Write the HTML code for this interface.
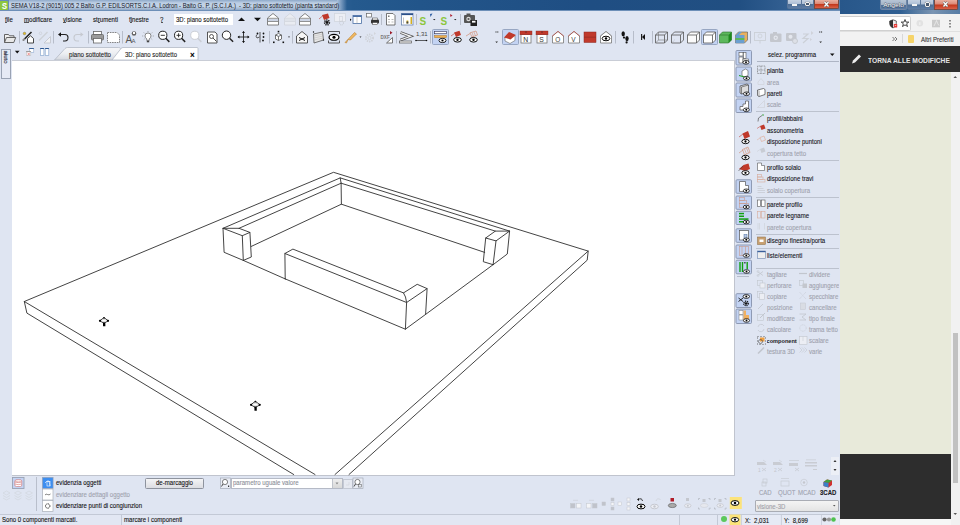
<!DOCTYPE html>
<html><head><meta charset="utf-8">
<style>
*{margin:0;padding:0;box-sizing:border-box}
html,body{width:960px;height:525px;overflow:hidden;background:#dfe5f2;font-family:"Liberation Sans",sans-serif;color:#000;position:relative}
.a{position:absolute}
.t{position:absolute;white-space:nowrap;line-height:8px;-webkit-text-stroke:0.1px currentColor;transform-origin:0 0}
svg{position:absolute;left:0;top:0;overflow:visible}
</style></head><body>
<div class="a" style="left:0px;top:0px;width:840px;height:11px;background:linear-gradient(90deg,#6a8cba 0%,#3c6ca0 38%,#255a8e 42%,#22558a 50%,#1f4e83 70%,#214f82 88%,#3a6698 96%,#5a80ac 100%)"></div>
<div class="a" style="left:0px;top:10px;width:840px;height:1px;background:#6d8fb8"></div>
<div class="a" style="left:9px;top:0px;width:328px;height:10px;background:linear-gradient(180deg,rgba(150,175,205,.9) 0%,rgba(196,212,232,.95) 30%,rgba(200,215,234,.95) 65%,rgba(150,172,200,.9) 100%)"></div>
<div class="a" style="left:337px;top:0px;width:10px;height:10px;background:linear-gradient(90deg,rgba(185,203,226,.9),rgba(185,203,226,0))"></div>
<div class="a" style="left:0px;top:1px;width:8.3px;height:9px;background:#8dc63f;border-radius:0 1px 1px 0"></div>
<div class="t" style="left:1.5px;top:1.81px;font-size:8.62px;color:#fff;font-weight:bold;transform:scaleX(0.870);">S</div>
<div class="t" style="left:11px;top:1.97px;font-size:6.73px;color:#141826;font-weight:normal;transform:scaleX(0.870);-webkit-text-stroke:0">SEMA V18-2 (9015) 005 2 Baito G.P. EDILSORTS.C.I.A. Lodron - Baito G. P. (S.C.I.A.) &nbsp;- 3D: piano sottotetto (pianta standard)</div>
<div class="a" style="left:787px;top:0px;width:15px;height:9px;border:0.6px solid #5a769a;border-top:none;border-radius:0 0 0 2px;background:linear-gradient(180deg,#c6d2e2 0%,#aebfd6 48%,#4d6d94 52%,#5d7da6 100%)"></div>
<div class="a" style="left:802px;top:0px;width:12px;height:9px;border:0.6px solid #5a769a;border-top:none;border-left:none;background:linear-gradient(180deg,#c6d2e2 0%,#aebfd6 48%,#4d6d94 52%,#5d7da6 100%)"></div>
<div class="a" style="left:814px;top:0px;width:25px;height:9px;border:0.6px solid #7a4a40;border-top:none;border-radius:0 0 2px 0;background:linear-gradient(180deg,#eab0a0 0%,#dc8a78 45%,#c4381c 55%,#d86048 100%)"></div>
<div class="a" style="left:792px;top:4.2px;width:5px;height:1.6px;background:#f4f4f4;box-shadow:0 0 0.6px #333"></div>
<div class="a" style="left:804.8px;top:1.6px;width:5px;height:4.8px;border:1.3px solid #f0f0f0;border-radius:1px;background:#4a5a70;box-shadow:0 0 0.8px #222"></div>
<svg width="960" height="525"><path d="M824.5,2 L828.5,6.5 M828.5,2 L824.5,6.5" stroke="#555" stroke-width="2.2"/><path d="M824.5,2 L828.5,6.5 M828.5,2 L824.5,6.5" stroke="#fff" stroke-width="1.3"/></svg>
<div class="t" style="left:4.5px;top:15.87px;font-size:7.01px;color:#111;font-weight:normal;transform:scaleX(0.870);">file</div>
<div class="t" style="left:24px;top:15.87px;font-size:7.01px;color:#111;font-weight:normal;transform:scaleX(0.870);">modificare</div>
<div class="t" style="left:63px;top:15.87px;font-size:7.01px;color:#111;font-weight:normal;transform:scaleX(0.870);">visione</div>
<div class="t" style="left:93px;top:15.87px;font-size:7.01px;color:#111;font-weight:normal;transform:scaleX(0.870);">strumenti</div>
<div class="t" style="left:129px;top:15.87px;font-size:7.01px;color:#111;font-weight:normal;transform:scaleX(0.870);">finestre</div>
<div class="t" style="left:160px;top:15.87px;font-size:7.01px;color:#111;font-weight:normal;transform:scaleX(0.870);">?</div>
<div class="a" style="left:4.8px;top:22.2px;width:2.2px;height:0.6px;background:#555"></div>
<div class="a" style="left:24.2px;top:22.2px;width:4.5px;height:0.6px;background:#555"></div>
<div class="a" style="left:63.2px;top:22.2px;width:3px;height:0.6px;background:#555"></div>
<div class="a" style="left:97.5px;top:22.2px;width:2px;height:0.6px;background:#555"></div>
<div class="a" style="left:129.5px;top:22.2px;width:2px;height:0.6px;background:#555"></div>
<div class="a" style="left:161px;top:22.2px;width:2px;height:0.6px;background:#555"></div>
<div class="a" style="left:174px;top:14px;width:59px;height:11px;background:#fff"></div>
<div class="t" style="left:175.5px;top:15.91px;font-size:6.90px;color:#111;font-weight:normal;transform:scaleX(0.870);">3D: piano sottotetto</div>
<div class="a" style="left:1px;top:49px;width:10px;height:30px;border:1px solid #9aa3b4;background:#e6eaf5"></div>
<div class="t" style="left:-6px;top:53px;font-size:6px;color:#223;transform:rotate(90deg);transform-origin:50% 50%;width:24px;text-align:center">aiuto</div>
<svg width="960" height="525"><defs><linearGradient id="tg" x1="0" y1="0" x2="0" y2="1"><stop offset="0" stop-color="#f6f6f8"/><stop offset="0.5" stop-color="#eceef2"/><stop offset="1" stop-color="#d4d7de"/></linearGradient></defs><path d="M54.5,60 L65,48.5 Q66,47.5 67.5,47.5 L118.5,47.5 Q120.5,47.5 121,49 L121,60 Z" fill="url(#tg)" stroke="#aab1bf" stroke-width="0.7"/><path d="M112,60 L121,48.5 Q121.8,47.5 123,47.5 L197,47.5 Q198,47.5 198,48.5 L198,60 Z" fill="#fff" stroke="#aab1bf" stroke-width="0.7"/></svg>
<div class="t" style="left:69px;top:51.15px;font-size:7.07px;color:#222;font-weight:normal;transform:scaleX(0.870);">piano sottotetto</div>
<div class="t" style="left:125px;top:51.21px;font-size:6.90px;color:#222;font-weight:normal;transform:scaleX(0.870);">3D: piano sottotetto</div>
<div class="t" style="left:190px;top:50.71px;font-size:9.20px;color:#000;font-weight:bold;transform:scaleX(0.870);">×</div>
<div class="a" style="left:12px;top:59.5px;width:723px;height:416.5px;background:#fff;border-right:1px solid #c0c4ce;border-bottom:1px solid #c0c4ce;border-top:0.8px solid #c9cdd6"></div>
<svg width="960" height="525">
<g fill="none" stroke="#2a2a2a" stroke-width="0.88" stroke-linejoin="round" stroke-linecap="round">
<polyline points="315,474.5 24.3,301.5 333.5,172.3 588.2,251.1 335,474.5"/>
<polyline points="24.3,301.5 26.9,313.1 293.7,474.5"/>
<polyline points="588.2,251.1 587.2,260.2 349,474.5"/>
<polyline points="223,228.3 340.2,177.9 509.6,231.1"/>
<polyline points="239,228.3 341.1,183.2 495.3,231.1"/>
<line x1="340.2" y1="177.9" x2="341.1" y2="183.2"/>
<polyline points="251.3,246.4 341.4,204.2 484.7,252.4"/>
<line x1="341.1" y1="183.2" x2="341.4" y2="204.2"/>
<polyline points="223,228.3 239,228.3 249.9,232.4 242.3,235.7 223,228.3 224.1,252.3 243.3,260.4 251.3,257 249.9,232.4"/>
<line x1="242.3" y1="235.7" x2="243.3" y2="260.4"/>
<polyline points="509.6,231.1 495.3,231.1 485.7,238 496,240.9 509.6,231.1 507.3,254 493.1,264.7 483.3,261.7 485.7,238"/>
<line x1="496" y1="240.9" x2="493.1" y2="264.7"/>
<line x1="243.3" y1="260.4" x2="285.2" y2="278.9"/>
<line x1="425.6" y1="314.4" x2="493.1" y2="264.7"/>
<polyline points="285.2,278.9 284.9,253.5 292.9,249.1 403.5,292.9 417.2,284.3 427.1,288.6 406.6,302.5 284.9,253.5"/>
<polyline points="285.2,278.9 405.4,329.2 425.6,314.4 427.1,288.6"/>
<polyline points="403.5,292.9 405.5,297 406.6,302.5 405.4,329.2"/>
</g>
<g>
<path d="M99.7,320.8 L104,317.6 L108.3,320.8 L104,323.2 Z" fill="#fff" stroke="#222" stroke-width="0.9"/><ellipse cx="104" cy="320.6" rx="2.3" ry="1.2" fill="#fff" stroke="#bbb" stroke-width="0.5"/><circle cx="100.0" cy="320.8" r="1.1" fill="#000"/><circle cx="108.0" cy="320.8" r="1.1" fill="#000"/><circle cx="104" cy="317.8" r="0.9" fill="#111"/><path d="M102.9,322.6 L105.3,322.6 L105.4,326.3 L103.1,326.3 Z" fill="#000"/>
<path d="M250.756,404.8 L255.4,401.344 L260.044,404.8 L255.4,407.392 Z" fill="#fff" stroke="#222" stroke-width="0.9"/><ellipse cx="255.4" cy="404.6" rx="2.484" ry="1.296" fill="#fff" stroke="#bbb" stroke-width="0.5"/><circle cx="251.08" cy="404.8" r="1.1" fill="#000"/><circle cx="259.72" cy="404.8" r="1.1" fill="#000"/><circle cx="255.4" cy="401.56" r="0.9" fill="#111"/><path d="M254.3,406.6 L256.7,406.6 L256.8,410.74 L254.5,410.74 Z" fill="#000"/>
</g>
</svg>
<div class="a" style="left:839px;top:46px;width:1px;height:479px;background:#c9cfdc"></div>
<div class="t" style="left:767.7px;top:50.61px;font-size:6.90px;color:#111;font-weight:normal;transform:scaleX(0.870);">selez. programma</div>
<svg width="960" height="525"><path d="M830,53.5 L834.5,53.5 L832.25,56 Z" fill="#111"/></svg>
<div class="a" style="left:757px;top:61px;width:82px;height:1px;background:#aeb5c4"></div>
<div class="t" style="left:766.6px;top:67.19px;font-size:6.96px;color:#141420;font-weight:normal;transform:scaleX(0.870);">pianta</div>
<div class="t" style="left:766.6px;top:78.59px;font-size:6.96px;color:#9ea2ad;font-weight:normal;transform:scaleX(0.870);">area</div>
<div class="t" style="left:766.6px;top:89.99px;font-size:6.96px;color:#141420;font-weight:normal;transform:scaleX(0.870);">pareti</div>
<div class="t" style="left:766.6px;top:101.39px;font-size:6.96px;color:#9ea2ad;font-weight:normal;transform:scaleX(0.870);">scale</div>
<div class="t" style="left:766.6px;top:115.49px;font-size:6.96px;color:#141420;font-weight:normal;transform:scaleX(0.870);">profili/abbaini</div>
<div class="t" style="left:766.6px;top:126.79px;font-size:6.96px;color:#141420;font-weight:normal;transform:scaleX(0.870);">assonometria</div>
<div class="t" style="left:766.6px;top:138.19px;font-size:6.96px;color:#141420;font-weight:normal;transform:scaleX(0.870);">disposizione puntoni</div>
<div class="t" style="left:766.6px;top:149.69px;font-size:6.96px;color:#9ea2ad;font-weight:normal;transform:scaleX(0.870);">copertura tetto</div>
<div class="t" style="left:766.6px;top:163.89px;font-size:6.96px;color:#141420;font-weight:normal;transform:scaleX(0.870);">profilo solaio</div>
<div class="t" style="left:766.6px;top:175.29px;font-size:6.96px;color:#141420;font-weight:normal;transform:scaleX(0.870);">disposizione travi</div>
<div class="t" style="left:766.6px;top:186.79px;font-size:6.96px;color:#9ea2ad;font-weight:normal;transform:scaleX(0.870);">solaio copertura</div>
<div class="t" style="left:766.6px;top:200.69px;font-size:6.96px;color:#141420;font-weight:normal;transform:scaleX(0.870);">parete profilo</div>
<div class="t" style="left:766.6px;top:211.99px;font-size:6.96px;color:#141420;font-weight:normal;transform:scaleX(0.870);">parete legname</div>
<div class="t" style="left:766.6px;top:223.59px;font-size:6.96px;color:#9ea2ad;font-weight:normal;transform:scaleX(0.870);">parete copertura</div>
<div class="t" style="left:766.6px;top:237.39px;font-size:6.96px;color:#141420;font-weight:normal;transform:scaleX(0.870);">disegno finestra/porta</div>
<div class="t" style="left:766.6px;top:251.59px;font-size:6.96px;color:#141420;font-weight:normal;transform:scaleX(0.870);">liste/elementi</div>
<div class="a" style="left:756px;top:110.8px;width:83px;height:1px;background:#bcc2ce"></div>
<div class="a" style="left:756px;top:159.8px;width:83px;height:1px;background:#bcc2ce"></div>
<div class="a" style="left:756px;top:196.7px;width:83px;height:1px;background:#bcc2ce"></div>
<div class="a" style="left:756px;top:234.2px;width:83px;height:1px;background:#bcc2ce"></div>
<div class="a" style="left:756px;top:248.1px;width:83px;height:1px;background:#bcc2ce"></div>
<div class="a" style="left:756px;top:267.9px;width:83px;height:1px;background:#bcc2ce"></div>
<div class="t" style="left:766.6px;top:270.99px;font-size:6.96px;color:#9ea2ad;font-weight:normal;transform:scaleX(0.870);">tagliare</div>
<div class="t" style="left:766.6px;top:281.99px;font-size:6.96px;color:#9ea2ad;font-weight:normal;transform:scaleX(0.870);">perforare</div>
<div class="t" style="left:766.6px;top:292.99px;font-size:6.96px;color:#9ea2ad;font-weight:normal;transform:scaleX(0.870);">copiare</div>
<div class="t" style="left:766.6px;top:304.09px;font-size:6.96px;color:#9ea2ad;font-weight:normal;transform:scaleX(0.870);">posizione</div>
<div class="t" style="left:766.6px;top:314.99px;font-size:6.96px;color:#9ea2ad;font-weight:normal;transform:scaleX(0.870);">modificare</div>
<div class="t" style="left:766.6px;top:325.99px;font-size:6.96px;color:#9ea2ad;font-weight:normal;transform:scaleX(0.870);">calcolare</div>
<div class="t" style="left:766.6px;top:337.46px;font-size:5.60px;color:#1a1a24;font-weight:bold;transform:scaleX(1.000);width:30.5px;overflow:hidden;-webkit-text-stroke:0">componenti</div>
<div class="t" style="left:766.6px;top:347.99px;font-size:6.96px;color:#9ea2ad;font-weight:normal;transform:scaleX(0.870);">testura 3D</div>
<div class="t" style="left:808.7px;top:270.99px;font-size:6.96px;color:#9ea2ad;font-weight:normal;transform:scaleX(0.870);">dividere</div>
<div class="t" style="left:808.7px;top:281.99px;font-size:6.96px;color:#9ea2ad;font-weight:normal;transform:scaleX(0.870);">aggiungere</div>
<div class="t" style="left:808.7px;top:292.99px;font-size:6.96px;color:#9ea2ad;font-weight:normal;transform:scaleX(0.870);">specchiare</div>
<div class="t" style="left:808.7px;top:304.09px;font-size:6.96px;color:#9ea2ad;font-weight:normal;transform:scaleX(0.870);">cancellare</div>
<div class="t" style="left:808.7px;top:314.99px;font-size:6.96px;color:#9ea2ad;font-weight:normal;transform:scaleX(0.870);">tipo finale</div>
<div class="t" style="left:808.7px;top:325.99px;font-size:6.96px;color:#9ea2ad;font-weight:normal;transform:scaleX(0.870);">trama tetto</div>
<div class="t" style="left:808.7px;top:336.99px;font-size:6.96px;color:#9ea2ad;font-weight:normal;transform:scaleX(0.870);">scalare</div>
<div class="t" style="left:808.7px;top:347.99px;font-size:6.96px;color:#9ea2ad;font-weight:normal;transform:scaleX(0.870);">varie</div>
<div class="t" style="left:759px;top:489.01px;font-size:6.90px;color:#9ea3b0;font-weight:normal;transform:scaleX(0.870);">CAD</div>
<div class="t" style="left:778px;top:489.01px;font-size:6.90px;color:#9ea3b0;font-weight:normal;transform:scaleX(0.870);">QUOT</div>
<div class="t" style="left:797.5px;top:489.01px;font-size:6.90px;color:#9ea3b0;font-weight:normal;transform:scaleX(0.870);">MCAD</div>
<div class="t" style="left:820px;top:489.01px;font-size:6.90px;color:#1a1a24;font-weight:bold;transform:scaleX(0.870);">3CAD</div>
<div class="a" style="left:831px;top:457px;width:9px;height:18px;background:#eceff6"></div>
<svg width="960" height="525"><path d="M833.5,462 L836.5,462 L835,460 Z M833.5,469 L836.5,469 L835,471 Z" fill="#333"/></svg>
<div class="a" style="left:755px;top:500px;width:84px;height:11.5px;background:linear-gradient(#f4f4f4,#e4e4e4);border:1px solid #a9acb4;border-radius:1px"></div>
<div class="t" style="left:756.5px;top:502.51px;font-size:6.90px;color:#a0a0a8;font-weight:normal;transform:scaleX(0.870);">visione-3D</div>
<svg width="960" height="525"><path d="M833,505 L835.5,505 L834.25,506.6 Z" fill="#555"/></svg>
<div class="a" style="left:36px;top:477px;width:1px;height:34px;background:#b9bfcc"></div>
<div class="t" style="left:56px;top:479.39px;font-size:6.96px;color:#111;font-weight:normal;transform:scaleX(0.870);">evidenzia oggetti</div>
<div class="t" style="left:56px;top:490.79px;font-size:6.96px;color:#9ea2ad;font-weight:normal;transform:scaleX(0.870);">evidenziare dettagli oggetto</div>
<div class="t" style="left:56px;top:502.29px;font-size:6.96px;color:#111;font-weight:normal;transform:scaleX(0.870);">evidenziare punti di congiunzion</div>
<div class="a" style="left:145px;top:477.5px;width:59px;height:11px;background:linear-gradient(#f4f4f6,#dcdde2);border:1px solid #8e939e;border-radius:1.5px"></div>
<div class="t" style="left:156px;top:478.99px;font-size:6.96px;color:#111;font-weight:normal;transform:scaleX(0.870);">de-marcaggio</div>
<div class="a" style="left:231px;top:478px;width:112px;height:10.5px;background:#fff;border:1px solid #b5bac6"></div>
<div class="t" style="left:233px;top:479.39px;font-size:6.96px;color:#8a8e98;font-weight:normal;transform:scaleX(0.870);">parametro uguale valore</div>
<div class="a" style="left:332px;top:478.5px;width:10px;height:9.5px;background:linear-gradient(#eee,#d8d8d8);border-left:1px solid #c0c4cc"></div>
<svg width="960" height="525"><path d="M335.5,482.5 L338.5,482.5 L337,484.5 Z" fill="#888"/></svg>
<div class="a" style="left:343px;top:478.5px;width:9.5px;height:10px;background:#e6e9f1;border:1px solid #c4c9d4"></div>
<div class="a" style="left:0px;top:514px;width:840px;height:11px;background:#e2e7f3;border-top:1px solid #c3c9d6"></div>
<div class="a" style="left:121px;top:514.5px;width:1px;height:10.5px;background:#c3c9d6"></div>
<div class="a" style="left:678.5px;top:514.5px;width:1px;height:10.5px;background:#c3c9d6"></div>
<div class="a" style="left:716.5px;top:514.5px;width:1px;height:10.5px;background:#c3c9d6"></div>
<div class="t" style="left:2px;top:516.49px;font-size:6.96px;color:#111;font-weight:normal;transform:scaleX(0.870);">Sono 0 componenti marcati.</div>
<div class="t" style="left:124px;top:516.49px;font-size:6.96px;color:#111;font-weight:normal;transform:scaleX(0.870);">marcare i componenti</div>
<div class="a" style="left:741px;top:514.5px;width:39px;height:10.5px;background:#e6eaf5;border-left:1px solid #cdd2de"></div>
<div class="a" style="left:780.5px;top:514.5px;width:40px;height:10.5px;background:#e6eaf5;border-left:1px solid #cdd2de"></div>
<div class="a" style="left:820.5px;top:514.5px;width:19px;height:10.5px;background:#e6eaf5;border-left:1px solid #cdd2de"></div>
<div class="t" style="left:744.5px;top:516.69px;font-size:6.96px;color:#111;font-weight:normal;transform:scaleX(0.870);">X: &nbsp;2,031</div>
<div class="t" style="left:783.5px;top:516.69px;font-size:6.96px;color:#111;font-weight:normal;transform:scaleX(0.870);">Y: &nbsp;8,699</div>
<svg width="960" height="525"><circle cx="824.5" cy="519.5" r="2.1" fill="#666"/><circle cx="829" cy="519.5" r="2.1" fill="#999"/><circle cx="833.5" cy="519.5" r="2.3" fill="#4fc24f"/><circle cx="724" cy="519" r="3" fill="#5cc85c"/></svg>
<div class="a" style="left:840px;top:0px;width:120px;height:525px;background:#e8eada"></div>
<div class="a" style="left:840px;top:0px;width:120px;height:14px;background:linear-gradient(90deg,#28578a,#2f5f92 50%,#3a6898 80%,#4a74a0)"></div>
<div class="a" style="left:900px;top:10px;width:60px;height:4px;background:linear-gradient(90deg,rgba(140,160,185,0),rgba(150,168,190,.7) 55%,rgba(140,160,185,.2))"></div>
<div class="a" style="left:880px;top:0px;width:27px;height:9.5px;border:0.6px solid #6f86a6;border-top:none;border-radius:0 0 2px 2px;background:linear-gradient(180deg,#b8c6d6 0%,#a4b4c8 50%,#4e6e96 54%,#5c7ca4 100%)"></div>
<svg width="960" height="525"><text x="883.3" y="7.2" font-family="Liberation Sans" font-size="6.1" textLength="20.5" lengthAdjust="spacingAndGlyphs" fill="#fff" stroke="#2a3444" stroke-width="0.9" stroke-opacity="0.55" paint-order="stroke">Angelo</text></svg>
<div class="a" style="left:907px;top:0px;width:14px;height:9.5px;border:0.6px solid #5a769a;border-top:none;border-radius:0 0 0 2px;background:linear-gradient(180deg,#c6d2e2 0%,#aebfd6 48%,#4d6d94 52%,#5d7da6 100%)"></div>
<div class="a" style="left:921px;top:0px;width:13px;height:9.5px;border:0.6px solid #5a769a;border-top:none;border-left:none;background:linear-gradient(180deg,#c6d2e2 0%,#aebfd6 48%,#4d6d94 52%,#5d7da6 100%)"></div>
<div class="a" style="left:934px;top:0px;width:24px;height:9.5px;border:0.6px solid #7a4a40;border-top:none;border-radius:0 0 2px 0;background:linear-gradient(180deg,#eab0a0 0%,#dc8a78 45%,#c4381c 55%,#d86048 100%)"></div>
<div class="a" style="left:911.5px;top:4.3px;width:5px;height:1.6px;background:#f4f4f4;box-shadow:0 0 0.6px #333"></div>
<div class="a" style="left:925px;top:1.8px;width:5px;height:4.8px;border:1.3px solid #f0f0f0;border-radius:1px;background:#4a5a70;box-shadow:0 0 0.8px #222"></div>
<svg width="960" height="525"><path d="M943.5,2 L947.5,6.5 M947.5,2 L943.5,6.5" stroke="#555" stroke-width="2.2"/><path d="M943.5,2 L947.5,6.5 M947.5,2 L943.5,6.5" stroke="#fff" stroke-width="1.3"/></svg>
<div class="a" style="left:840px;top:14px;width:120px;height:17px;background:#f2f2f2"></div>
<div class="a" style="left:840px;top:16px;width:71px;height:14.5px;background:#fff;border:1px solid #d0d0d0;border-left:none;border-radius:0 2px 2px 0"></div>
<div class="a" style="left:840px;top:31px;width:120px;height:15px;background:#f2f2f2;border-top:1px solid #e0e0e0"></div>
<svg width="960" height="525"><path d="M892.5,37 L894.5,39 L892.5,41 M895,37 L897,39 L895,41" fill="none" stroke="#555" stroke-width="0.8"/></svg>
<div class="a" style="left:902px;top:34px;width:1px;height:9px;background:#d8d8d8"></div>
<div class="a" style="left:908px;top:35px;width:6px;height:8px;background:#f6d46a;border-radius:1px"></div>
<div class="t" style="left:921px;top:35.71px;font-size:6.90px;color:#333;font-weight:normal;transform:scaleX(0.870);">Altri Preferiti</div>
<div class="a" style="left:840px;top:46px;width:120px;height:26px;background:#2d2d2d"></div>
<div class="t" style="left:868px;top:56.73px;font-size:7.70px;color:#e4e4e4;font-weight:bold;transform:scaleX(0.870);-webkit-text-stroke:0">TORNA ALLE MODIFICHE</div>
<svg width="960" height="525"><path d="M852,63.5 L853,60.5 L859,54.5 L861,56.5 L855,62.5 Z" fill="#eee"/><path d="M950,20 v1.6 M950,23 v1.6 M950,26 v1.6" stroke="#555" stroke-width="1.3"/><circle cx="919.8" cy="23.2" r="3.3" fill="#e2e2e2"/><rect x="919.4" y="22.2" width="0.9" height="2.8" fill="#f6f6f6"/><rect x="932" y="19.8" width="8" height="7.5" fill="#cbcbcb"/><path d="M934,26 Q936,22 936.5,20.5 Q937.5,24 939,25.5" fill="none" stroke="#eee" stroke-width="0.8"/><path d="M905,19.5 l1,2.6 2.8,0 -2.2,1.7 0.9,2.7 -2.5,-1.6 -2.5,1.6 0.9,-2.7 -2.2,-1.7 2.8,0 z" fill="none" stroke="#333" stroke-width="0.9"/><path d="M893,19.8 L896.3,21 L896.3,23.5 Q896.3,26.5 893,28 Q889.7,26.5 889.7,23.5 L889.7,21 Z" fill="#eee" stroke="#333" stroke-width="0.7"/><path d="M893,19.8 L889.7,21 L889.7,23.5 Q889.7,26.5 893,28 Z" fill="#333"/><rect x="893.8" y="24" width="3.4" height="3.4" rx="0.5" fill="#e53935"/><rect x="894.8" y="25.4" width="1.4" height="0.6" fill="#fff"/></svg>
<div class="a" style="left:951px;top:72px;width:9px;height:453px;background:#f1f1f1"></div>
<div class="a" style="left:953px;top:332.5px;width:5px;height:150px;background:#c1c1c1"></div>
<svg width="960" height="525"><path d="M953.5,78 L957,78 L955.25,76 Z M953.5,513 L957,513 L955.25,515 Z" fill="#555"/></svg>
<div class="a" style="left:840px;top:453.6px;width:111px;height:65.5px;background:#2d2d2d"></div>
<div class="a" style="left:840px;top:519px;width:111px;height:6px;background:#f6f6f6"></div>
<div class="a" style="left:839px;top:46px;width:1px;height:479px;background:#dfe5f2"></div>
<svg width="960" height="525"><path d="M238,21 L245,21 L241.5,17.5 Z" fill="#111"/><path d="M254,17.7 L261,17.7 L257.5,21.2 Z" fill="#111"/><path d="M267.5,25 L267.5,18 L273,13.5 L278.5,18 L278.5,25 Z" fill="#fff" stroke="#666" stroke-width="0.8"/><rect x="268" y="19" width="10" height="2.2" fill="#ccd4e4"/><line x1="268" y1="21.5" x2="278" y2="21.5" stroke="#666" stroke-width="0.7"/><line x1="268" y1="18.3" x2="278" y2="18.3" stroke="#666" stroke-width="0.7"/><path d="M284.5,25 L284.5,18 L290,13.5 L295.5,18 L295.5,25 Z" fill="#e9ecf2" stroke="#cfd3da" stroke-width="0.8"/><rect x="285" y="19" width="10" height="2.2" fill="#dfe3ea"/><line x1="285" y1="21.5" x2="295" y2="21.5" stroke="#cfd3da" stroke-width="0.7"/><line x1="285" y1="18.3" x2="295" y2="18.3" stroke="#cfd3da" stroke-width="0.7"/><path d="M299.5,25 L299.5,18 L305,13.5 L310.5,18 L310.5,25 Z" fill="#fff" stroke="#666" stroke-width="0.8"/><rect x="300" y="19" width="10" height="2.2" fill="#ccd4e4"/><line x1="300" y1="21.5" x2="310" y2="21.5" stroke="#666" stroke-width="0.7"/><line x1="300" y1="18.3" x2="310" y2="18.3" stroke="#666" stroke-width="0.7"/><path d="M319,19 L322.5,16" stroke="#c0392b" stroke-width="0.6"/><path d="M322,15 L328,13.5 L329.5,18 L324,20 Z" fill="#c0392b"/><circle cx="327" cy="22.5" r="2.4" fill="none" stroke="#111" stroke-width="1.5" stroke-dasharray="1.1,0.8"/><circle cx="327" cy="22.5" r="1.4" fill="#111"/><rect x="334.5" y="13.5" width="11" height="8" fill="#eceef4" stroke="#d2d6de" stroke-width="0.8"/><rect x="339.5" y="16.5" width="3" height="5" fill="none" stroke="#cfd3da" stroke-width="0.6"/><circle cx="341.5" cy="23" r="2" fill="none" stroke="#c8ccd4" stroke-width="1" stroke-dasharray="1,0.7"/><path d="M350,18.5 L351.5,19.8 L350,21 Z" fill="#111"/><rect x="353" y="15.5" width="8.5" height="8" fill="#fff" stroke="#4a6fa5" stroke-width="0.8"/><rect x="353" y="15.5" width="8.5" height="1.5" fill="#4a6fa5"/><line x1="357" y1="17" x2="357" y2="23.5" stroke="#999" stroke-width="0.5"/><rect x="366.5" y="13.5" width="5" height="3.5" fill="#fff" stroke="#666" stroke-width="0.7"/><rect x="371" y="19.5" width="8" height="4" rx="1" fill="#333"/><rect x="372.5" y="18" width="5" height="2" fill="#fff" stroke="#333" stroke-width="0.5"/><rect x="372.5" y="22.5" width="5" height="2.2" fill="#fff" stroke="#333" stroke-width="0.5"/><rect x="381" y="14" width="1" height="11" fill="#b7bdca"/><path d="M386.5,13.5 L393,13.5 L395,15.5 L395,25 L386.5,25 Z" fill="#fff" stroke="#555" stroke-width="0.8"/><rect x="388" y="15.5" width="1.5" height="1.5" fill="#777"/><g fill="#bbb"><rect x="388" y="19" width="2" height="1"/><rect x="391.5" y="19" width="2" height="1"/><rect x="388" y="21.5" width="2" height="1"/><rect x="391.5" y="21.5" width="2" height="1"/></g><rect x="401.5" y="13.5" width="11.5" height="11.5" fill="#fff" stroke="#6b86b0" stroke-width="0.8"/><rect x="401.5" y="13.5" width="11.5" height="1.6" fill="#2a4f8a"/><rect x="410.5" y="17" width="1.5" height="7" fill="#d4b020"/><rect x="406.5" y="20.5" width="1.8" height="3" fill="#d4b020"/><rect x="406.5" y="21.5" width="1.8" height="2" fill="#444"/><line x1="403.5" y1="17.5" x2="403.5" y2="23.5" stroke="#999" stroke-width="0.6"/><rect x="416" y="14" width="1" height="11" fill="#b7bdca"/><text x="419.5" y="25" font-family="Liberation Sans" font-size="10" font-weight="bold" fill="#8cc63e">S</text><path d="M430,14 L432.5,13.5 L430.5,17 Z" fill="#2a5aa0"/><path d="M433,19 L435.5,19 L434.25,20.3 Z" fill="#222"/><text x="440.5" y="25" font-family="Liberation Sans" font-size="10" font-weight="bold" fill="#8cc63e">S</text><path d="M450,14 L452.5,15.5 L450.5,17 Z" fill="#b02030"/><path d="M454,19 L456.5,19 L455.25,20.3 Z" fill="#222"/><rect x="460" y="14" width="1" height="11" fill="#b7bdca"/><rect x="464" y="15" width="11" height="8" rx="1" fill="#555"/><rect x="466.5" y="13.5" width="4" height="2" fill="#555"/><circle cx="468.5" cy="19" r="2.2" fill="#ddd"/><circle cx="468.5" cy="19" r="1.1" fill="#555"/><rect x="470.5" y="20" width="6.5" height="6" fill="#222"/><rect x="472" y="20.8" width="3.5" height="1.8" fill="#fff"/><rect x="19" y="31" width="1" height="12.5" fill="#b7bdca"/><rect x="53" y="31" width="1" height="12.5" fill="#b7bdca"/><rect x="88" y="31" width="1" height="12.5" fill="#b7bdca"/><rect x="122" y="31" width="1" height="12.5" fill="#b7bdca"/><rect x="269" y="31" width="1" height="12.5" fill="#b7bdca"/><rect x="292" y="31" width="1" height="12.5" fill="#b7bdca"/><rect x="396" y="31" width="1" height="12.5" fill="#b7bdca"/><rect x="430" y="31" width="1" height="12.5" fill="#b7bdca"/><rect x="615" y="31" width="1" height="12.5" fill="#b7bdca"/><rect x="633" y="31" width="1" height="12.5" fill="#b7bdca"/><rect x="652" y="31" width="1" height="12.5" fill="#b7bdca"/><rect x="750" y="31" width="1" height="12.5" fill="#b7bdca"/><path d="M4.5,42.5 L4.5,34.5 L8.5,34.5 L9.5,35.8 L14,35.8 L14,37.5" fill="#f0f0f0" stroke="#555" stroke-width="0.9"/><path d="M4.5,42.5 L6.5,37.5 L15.7,37.5 L13.8,42.5 Z" fill="#e8e8e8" stroke="#555" stroke-width="0.9"/><path d="M27.5,43 L27.5,38.5 L30.5,35.8 L33.5,38.5 L33.5,43 Z" fill="#fff" stroke="#333" stroke-width="0.9"/><line x1="31.5" y1="32" x2="23" y2="40.5" stroke="#222" stroke-width="1.6"/><line x1="24.8" y1="38.7" x2="23" y2="40.5" stroke="#999" stroke-width="1.6"/><circle cx="24.5" cy="33.5" r="1.3" fill="#e8c020" stroke="#555" stroke-width="0.4"/><line x1="47.5" y1="32" x2="39" y2="40.5" stroke="#cfd2d8" stroke-width="1.5"/><path d="M44,43 L50.5,36.5 L50.5,43 Z" fill="#eef0f4" stroke="#c4c7ce" stroke-width="0.9"/><circle cx="40.5" cy="33.3" r="1.3" fill="none" stroke="#c8cbd2" stroke-width="0.6"/><path d="M60,34.5 L65,34.5 Q68,34.5 68,37.5 Q68,41 65,41 L63,41" fill="none" stroke="#222" stroke-width="1.1"/><path d="M58,34.5 L61,32.3 L61,36.7 Z" fill="#111"/><path d="M81.5,34.5 L77,34.5 Q74,34.5 74,37.5 Q74,41 77,41 L79,41" fill="none" stroke="#c6c9d0" stroke-width="1.1"/><path d="M83.5,34.5 L80.5,32.3 L80.5,36.7 Z" fill="#c6c9d0"/><rect x="93.5" y="31.5" width="8" height="3" fill="#fff" stroke="#666" stroke-width="0.8"/><rect x="91.5" y="34.5" width="12" height="5.5" rx="1" fill="#9a9a9a" stroke="#666" stroke-width="0.8"/><rect x="93.5" y="38.5" width="8" height="4.5" fill="#fff" stroke="#666" stroke-width="0.8"/><path d="M107.5,32.5 L117,32.5 L119.5,35 L119.5,42.5 L107.5,42.5 Z" fill="#fff" stroke="#777" stroke-width="0.9" stroke-dasharray="1.6,0.8"/><text x="125.5" y="42.8" font-family="Liberation Sans" font-size="10" fill="#555" transform="scale(1,1)">A</text><text x="131.5" y="43" font-family="Liberation Sans" font-size="6" fill="#555">A</text><circle cx="134" cy="33.5" r="2.3" fill="#666"/><rect x="133" y="32" width="2" height="2" fill="#fff"/><path d="M146.8,40.5 L146.8,39 Q145,37.8 145,35.8 Q145,33 148,33 Q151,33 151,35.8 Q151,37.8 149.2,39 L149.2,40.5 Z" fill="#fff" stroke="#555" stroke-width="0.7"/><rect x="146.8" y="41" width="2.4" height="1.3" fill="#444"/><g stroke="#777" stroke-width="0.6"><line x1="143.2" y1="36" x2="142.2" y2="36"/><line x1="153.8" y1="36" x2="152.8" y2="36"/><line x1="143.8" y1="32.5" x2="144.6" y2="33.3"/><line x1="152.2" y1="32.5" x2="151.4" y2="33.3"/><line x1="148" y1="31" x2="148" y2="32"/><line x1="143.8" y1="39.5" x2="144.6" y2="38.8"/><line x1="152.2" y1="39.5" x2="151.4" y2="38.8"/></g><circle cx="162.8" cy="35.3" r="4.1" fill="#fff" stroke="#222" stroke-width="1.0"/><line x1="165.752" y1="38.251999999999995" x2="169.352" y2="41.852" stroke="#222" stroke-width="1.5"/><line x1="160.75" y1="35.3" x2="164.85000000000002" y2="35.3" stroke="#222" stroke-width="0.9"/><circle cx="178.6" cy="35.3" r="4.1" fill="#fff" stroke="#222" stroke-width="1.0"/><line x1="181.552" y1="38.251999999999995" x2="185.152" y2="41.852" stroke="#222" stroke-width="1.5"/><line x1="176.54999999999998" y1="35.3" x2="180.65" y2="35.3" stroke="#222" stroke-width="0.9"/><line x1="178.6" y1="33.25" x2="178.6" y2="37.349999999999994" stroke="#222" stroke-width="0.9"/><circle cx="194.8" cy="35.3" r="4.1" fill="#fff" stroke="#cbced5" stroke-width="1.0"/><line x1="197.752" y1="38.251999999999995" x2="201.352" y2="41.852" stroke="#cbced5" stroke-width="1.5"/><path d="M207.5,32 L215,32 L217,34 L217,43 L207.5,43 Z" fill="#fff" stroke="#444" stroke-width="0.9"/><circle cx="211.5" cy="36.5" r="2" fill="#fff" stroke="#333" stroke-width="0.8"/><line x1="212.94" y1="37.94" x2="216.54" y2="41.54" stroke="#333" stroke-width="0.9"/><circle cx="226.5" cy="35.2" r="4.2" fill="#fff" stroke="#222" stroke-width="1.0"/><line x1="229.524" y1="38.224000000000004" x2="233.124" y2="41.824000000000005" stroke="#222" stroke-width="1.5"/><g stroke="#222" stroke-width="0.9"><line x1="243.5" y1="31.5" x2="243.5" y2="42.5"/><line x1="238" y1="37" x2="249" y2="37"/></g><path d="M243.5,31 L242,33 L245,33 Z M243.5,43 L242,41 L245,41 Z M237.5,37 L239.5,35.5 L239.5,38.5 Z M249.5,37 L247.5,35.5 L247.5,38.5 Z" fill="#111"/><path d="M257,34.5 Q255,36 257,38 L259.5,37" fill="none" stroke="#333" stroke-width="0.8"/><line x1="260" y1="32" x2="260" y2="42.5" stroke="#333" stroke-width="0.8"/><g fill="#111"><circle cx="257.5" cy="33.5" r="0.9"/><circle cx="263.5" cy="33.5" r="0.9"/><circle cx="263.5" cy="37" r="0.9"/><circle cx="263" cy="40.5" r="0.9"/></g><path d="M275.5,35 L278.5,33.5 L281.5,35 L281.5,39 L278.5,40.5 L275.5,39 Z M275.5,35 L278.5,36.5 L281.5,35 M278.5,36.5 L278.5,40.5" fill="#fff" stroke="#555" stroke-width="0.8"/><g fill="#111"><rect x="277.7" y="30.8" width="1.6" height="1.6"/><rect x="273" y="41.5" width="1.6" height="1.6"/><rect x="282.5" y="41.5" width="1.6" height="1.6"/></g><path d="M288,36.5 L290,36.5 L289,37.8 Z" fill="#222"/><path d="M296.5,43 L296.5,36 L302,31.5 L307.5,36 L307.5,43 Z" fill="#f6f6f6" stroke="#444" stroke-width="0.9"/><path d="M299,37.5 L305,40.5 M299,40.5 L305,37.5" stroke="#111" stroke-width="1"/><path d="M313.5,34 L322.5,32 L323.5,40 L314,43 Z" fill="#e6e6e6" stroke="#555" stroke-width="0.8"/><g stroke="#bbb" stroke-width="0.5"><line x1="314" y1="36" x2="323" y2="34"/><line x1="314" y1="38" x2="323" y2="36"/><line x1="314" y1="40" x2="323" y2="38"/></g><circle cx="313.5" cy="32" r="0.7" fill="#111"/><circle cx="323.5" cy="40" r="0.7" fill="#111"/><g stroke="#333" stroke-width="0.8" fill="none"><path d="M328.5,34 L328.5,31.5 L339.5,31.5 L339.5,34 M328.5,40.5 L328.5,43 L339.5,43 L339.5,40.5"/></g><ellipse cx="334" cy="37.3" rx="4.960000000000001" ry="2.945" fill="#fff" stroke="#000" stroke-width="1.2400000000000002"/><circle cx="334" cy="37.3" r="1.55" fill="#000"/><path d="M345,42.5 L354.5,32.5 L356.5,34 L350.5,40 L348,39.5 L346.5,43 Z" fill="#f0b860" stroke="#b98030" stroke-width="0.6"/><path d="M359.5,36.5 L361.5,36.5 L360.5,37.8 Z" fill="#222"/><circle cx="369.5" cy="38" r="3.6" fill="none" stroke="#cdd0d6" stroke-width="1.6" stroke-dasharray="1.3,1"/><circle cx="369.5" cy="38" r="1.6" fill="none" stroke="#cdd0d6" stroke-width="0.8"/><path d="M374,32 L376,33.5 L374,35 Z" fill="#d2d5db"/><text x="380.5" y="38.5" font-family="Liberation Sans" font-size="4.6" font-weight="bold" fill="#777">DXF</text><path d="M386.5,43 L392.5,37.5 L392.5,43 Z" fill="#fff" stroke="#555" stroke-width="0.8"/><path d="M390,31 L392.5,32.8 L390,34.5 Z" fill="#9b1b2a"/><path d="M400.5,32.5 L410.5,36.3 L400.5,40" fill="none" stroke="#555" stroke-width="2.8" stroke-linejoin="miter"/><path d="M400.5,32.5 L410.5,36.3 L400.5,40" fill="none" stroke="#f4f4f4" stroke-width="1.3" stroke-linejoin="miter"/><rect x="399.5" y="41" width="12" height="2" fill="#f4f4f4" stroke="#555" stroke-width="0.7"/><text x="416" y="36.3" font-family="Liberation Sans" font-size="6" fill="#444">1,31</text><line x1="416" y1="40.5" x2="426.5" y2="40.5" stroke="#222" stroke-width="0.7"/><circle cx="416" cy="40.5" r="0.8" fill="#111"/><circle cx="426.5" cy="40.5" r="0.8" fill="#111"/><rect x="432.5" y="29.5" width="16" height="15" fill="#c3d3f3" stroke="#97a6c2" stroke-width="1" rx="1"/><rect x="434.5" y="31.5" width="12" height="2.2" fill="#fff" stroke="#335" stroke-width="0.6"/><rect x="434.5" y="35.5" width="12" height="2.2" fill="#f0b050" stroke="#a06b20" stroke-width="0.4"/><ellipse cx="442.5" cy="40.5" rx="3.5200000000000005" ry="2.09" fill="#fff" stroke="#000" stroke-width="0.8800000000000001"/><circle cx="442.5" cy="40.5" r="1.1" fill="#000"/><path d="M451,36 L454.5,33.5" stroke="#c0392b" stroke-width="0.6"/><path d="M454,32.5 L459.5,30.8 L461,35 L456,37 Z" fill="#c0392b"/><ellipse cx="457.5" cy="39.8" rx="3.84" ry="2.28" fill="#fff" stroke="#000" stroke-width="0.96"/><circle cx="457.5" cy="39.8" r="1.2" fill="#000"/><path d="M466,36 L470,33.5" stroke="#d08060" stroke-width="0.6"/><path d="M470,32.8 L476,31 L477.5,35 L472,37 Z" fill="none" stroke="#d08060" stroke-width="0.6"/><g stroke="#d08060" stroke-width="0.5"><line x1="472" y1="32.5" x2="473.5" y2="36.5"/><line x1="474" y1="32" x2="475.5" y2="36"/></g><ellipse cx="473.5" cy="39.8" rx="3.84" ry="2.28" fill="#fff" stroke="#000" stroke-width="0.96"/><circle cx="473.5" cy="39.8" r="1.2" fill="#000"/><path d="M495.5,31 L496.5,32 L495.5,33 M497.3,31 L498.3,32 L497.3,33" fill="none" stroke="#333" stroke-width="0.6"/><path d="M495.3,41.5 L498,41.5 L496.6,43 Z" fill="#333"/><rect x="502.5" y="29.5" width="16" height="15" fill="#c3d3f3" stroke="#97a6c2" stroke-width="1" rx="1"/><path d="M505,37 L505,41 L510,43.5 L515,40.5 L515,36 L510,33 Z" fill="#fff" stroke="#666" stroke-width="0.6"/><path d="M504,37.5 L509,32 L516,35 L510.5,39.5 Z" fill="#c0392b"/><rect x="521" y="34.5" width="10" height="8.5" fill="#fff" stroke="#777" stroke-width="0.8"/><rect x="520" y="31" width="12" height="3.8" fill="#c0392b" stroke="#8a2a20" stroke-width="0.4"/><rect x="525.6" y="31.5" width="0.8" height="1.2" fill="#222"/><text x="523.2" y="42.3" font-family="Liberation Sans" font-size="6.8" fill="#333">N</text><rect x="537" y="34.5" width="10" height="8.5" fill="#fff" stroke="#777" stroke-width="0.8"/><rect x="536" y="31" width="12" height="3.8" fill="#c0392b" stroke="#8a2a20" stroke-width="0.4"/><rect x="541.6" y="31.5" width="0.8" height="1.2" fill="#222"/><text x="539.2" y="42.3" font-family="Liberation Sans" font-size="6.8" fill="#333">S</text><path d="M552.5,43 L552.5,36 L558,31.5 L563.5,36 L563.5,43 Z" fill="#fff" stroke="#777" stroke-width="0.8"/><path d="M552,36.3 L558,31.3 L564,36.3" fill="none" stroke="#c0392b" stroke-width="0.6"/><text x="555.3" y="42.3" font-family="Liberation Sans" font-size="6.5" fill="#444">O</text><path d="M568.5,43 L568.5,36 L574,31.5 L579.5,36 L579.5,43 Z" fill="#fff" stroke="#777" stroke-width="0.8"/><path d="M568,36.3 L574,31.3 L580,36.3" fill="none" stroke="#c0392b" stroke-width="0.6"/><text x="571.3" y="42.3" font-family="Liberation Sans" font-size="6.5" fill="#444">V</text><rect x="584" y="32" width="12" height="10.5" fill="#c0392b" stroke="#8b2a22" stroke-width="0.5"/><line x1="584" y1="37.2" x2="596" y2="37.2" stroke="#8b2a22" stroke-width="0.6"/><path d="M600.5,43 L600.5,36 L606,31.5 L611.5,36 L611.5,43 Z" fill="#fff" stroke="#777" stroke-width="0.8"/><path d="M600,36.3 L606,31.3 L612,36.3" fill="none" stroke="#888" stroke-width="0.6"/><ellipse cx="606" cy="38.5" rx="3.84" ry="2.28" fill="#fff" stroke="#000" stroke-width="0.96"/><circle cx="606" cy="38.5" r="1.2" fill="#000"/><ellipse cx="623.2" cy="33.8" rx="1.7" ry="2.6" fill="#111"/><ellipse cx="624" cy="37.6" rx="1.1" ry="1.1" fill="#111"/><ellipse cx="627" cy="38.6" rx="1.7" ry="2.6" fill="#111"/><ellipse cx="626.6" cy="42.4" rx="1.1" ry="1.1" fill="#111"/><rect x="641" y="34" width="1.2" height="6" fill="#222"/><path d="M645,34 L642,37 L645,40 Z" fill="#111"/><path d="M655.5,35 L658.5,32 L667.5,32 L667.5,40 L664.5,43 L655.5,43 Z" fill="none" stroke="#555" stroke-width="0.8"/><path d="M655.5,35 L664.5,35 L667.5,32 M664.5,35 L664.5,43" fill="none" stroke="#555" stroke-width="0.8"/><path d="M658.5,32 L658.5,40 L667.5,40 M658.5,40 L655.5,43" fill="none" stroke="#777" stroke-width="0.6"/><path d="M671.5,35 L674.5,32 L683.5,32 L683.5,40 L680.5,43 L671.5,43 Z" fill="none" stroke="#555" stroke-width="0.8"/><path d="M671.5,35 L680.5,35 L683.5,32 M680.5,35 L680.5,43" fill="none" stroke="#555" stroke-width="0.8"/><path d="M674.5,40 L671.5,43" fill="none" stroke="#999" stroke-width="0.6" stroke-dasharray="1,1"/><path d="M687.5,35 L690.5,32 L699.5,32 L699.5,40 L696.5,43 L687.5,43 Z" fill="#fafafa" stroke="#555" stroke-width="0.8"/><path d="M687.5,35 L696.5,35 L699.5,32 M696.5,35 L696.5,43" fill="none" stroke="#555" stroke-width="0.8"/><rect x="701.5" y="29.5" width="16" height="15" fill="#c3d3f3" stroke="#97a6c2" stroke-width="1" rx="1"/><path d="M703.5,35 L706.5,32 L715.5,32 L715.5,40 L712.5,43 L703.5,43 Z" fill="#fff" stroke="#555" stroke-width="0.8"/><path d="M703.5,35 L712.5,35 L715.5,32 M712.5,35 L712.5,43" fill="none" stroke="#555" stroke-width="0.8"/><path d="M719.5,35 L722.5,32 L731.5,32 L731.5,40 L728.5,43 L719.5,43 Z" fill="#5cb85c" stroke="#2e6b2e" stroke-width="0.6"/><path d="M728.5,35 L731.5,32 L731.5,40 L728.5,43 Z" fill="#1e8a1e"/><path d="M719.5,35 L728.5,35" stroke="#2e6b2e" stroke-width="0.6"/><path d="M735.5,35 L738.5,32 L747.5,32 L747.5,40 L744.5,43 L735.5,43 Z" fill="#e8b060" stroke="#555" stroke-width="0.6"/><rect x="735.5" y="35" width="9" height="3" fill="#6a9fd0"/><rect x="735.5" y="40" width="9" height="3" fill="#6a9fd0"/><rect x="735.5" y="38" width="9" height="2" fill="#5cb85c"/><path d="M739,32 L742,32 L739,35 L736,35 Z" fill="#6a9fd0"/><rect x="754.5" y="32.5" width="11" height="8" fill="none" stroke="#ccd0d7" stroke-width="0.9"/><circle cx="760" cy="36" r="2" fill="none" stroke="#ccd0d7" stroke-width="0.8"/><line x1="760" y1="40.5" x2="760" y2="43.5" stroke="#ccd0d7"/><rect x="770" y="33.5" width="11.5" height="8.5" rx="1" fill="#c4c7ce"/><rect x="773" y="32" width="4" height="2" fill="#c4c7ce"/><circle cx="775.7" cy="37.7" r="2.2" fill="#e4e7ee"/><circle cx="775.7" cy="37.7" r="1" fill="#c4c7ce"/><rect x="786" y="33" width="10.5" height="8" rx="1" fill="#c4c7ce"/><circle cx="790.5" cy="36.8" r="2" fill="#e4e7ee"/><circle cx="795" cy="41" r="2.5" fill="#dde0e7" stroke="#c4c7ce" stroke-width="0.9"/><path d="M803,34 L808,34 L803,38.5 L808,38.5 L803,43" fill="none" stroke="#ccd0d7" stroke-width="1.2"/><path d="M811,31 L813.5,33 L811,35 Z M810,38 L812,39.5 L810,41 Z" fill="#d0d3da"/><path d="M819.3,31 L820.3,32 L819.3,33 M821.1,31 L822.1,32 L821.1,33" fill="none" stroke="#333" stroke-width="0.6"/><path d="M819.3,41.5 L822,41.5 L820.6,43 Z" fill="#333"/><rect x="736.0" y="50.5" width="15.5" height="14.5" fill="#c3d3f3" stroke="#8e9ab4" stroke-width="1" rx="1"/><rect x="736.0" y="67.0" width="15.5" height="14.0" fill="#c3d3f3" stroke="#8e9ab4" stroke-width="1" rx="1"/><rect x="736.0" y="83.0" width="15.5" height="14.0" fill="#c3d3f3" stroke="#8e9ab4" stroke-width="1" rx="1"/><rect x="736.0" y="99.0" width="15.5" height="13.5" fill="#c3d3f3" stroke="#8e9ab4" stroke-width="1" rx="1"/><rect x="736.0" y="179.8" width="15.5" height="13.5" fill="#c3d3f3" stroke="#8e9ab4" stroke-width="1" rx="1"/><rect x="736.0" y="196.0" width="15.5" height="13.300000000000011" fill="#c3d3f3" stroke="#8e9ab4" stroke-width="1" rx="1"/><rect x="736.0" y="211.3" width="15.5" height="13.199999999999989" fill="#c3d3f3" stroke="#8e9ab4" stroke-width="1" rx="1"/><rect x="736.0" y="228.8" width="15.5" height="13.5" fill="#c3d3f3" stroke="#8e9ab4" stroke-width="1" rx="1"/><rect x="736.0" y="245.0" width="15.5" height="13.300000000000011" fill="#c3d3f3" stroke="#8e9ab4" stroke-width="1" rx="1"/><rect x="736.0" y="260.2" width="15.5" height="13.600000000000023" fill="#c3d3f3" stroke="#8e9ab4" stroke-width="1" rx="1"/><rect x="736.0" y="293.7" width="15.5" height="13.800000000000011" fill="#c3d3f3" stroke="#8e9ab4" stroke-width="1" rx="1"/><rect x="736.0" y="309.1" width="15.5" height="14.399999999999977" fill="#c3d3f3" stroke="#8e9ab4" stroke-width="1" rx="1"/><rect x="737" y="276" width="12" height="1" fill="#b5bccb"/><g fill="#fff" stroke="#555" stroke-width="0.6"><rect x="739" y="52.5" width="4" height="3.5"/><rect x="743.5" y="52.5" width="2.5" height="6"/><rect x="739" y="57" width="4" height="6"/><rect x="743" y="59" width="5.5" height="4"/></g><ellipse cx="746" cy="62.3" rx="3.04" ry="1.805" fill="#fff" stroke="#000" stroke-width="0.76"/><circle cx="746" cy="62.3" r="0.95" fill="#000"/><path d="M742,71 L745.5,69 L748,70.5 L748,75.5 L744.5,77 L742,75.5 Z" fill="#fff" stroke="#555" stroke-width="0.6"/><line x1="739" y1="75.5" x2="750" y2="78.5" stroke="#20a020" stroke-width="1"/><ellipse cx="746.5" cy="78.3" rx="3.04" ry="1.805" fill="#fff" stroke="#000" stroke-width="0.76"/><circle cx="746.5" cy="78.3" r="0.95" fill="#000"/><path d="M740,86 L747,84 L748.5,85 L748.5,92 L741.5,94 L740,93 Z" fill="#ddd" stroke="#444" stroke-width="0.7"/><path d="M741.5,87 L748.5,85 M741.5,87 L741.5,94" fill="none" stroke="#444" stroke-width="0.6"/><ellipse cx="746.5" cy="93.8" rx="3.04" ry="1.805" fill="#fff" stroke="#000" stroke-width="0.76"/><circle cx="746.5" cy="93.8" r="0.95" fill="#000"/><path d="M740,110 L740,106.5 L743,106.5 L743,104 L745.5,104 L745.5,101 L748.5,101 L748.5,110 Z" fill="#fff" stroke="#555" stroke-width="0.7"/><ellipse cx="746.3" cy="109.8" rx="3.04" ry="1.805" fill="#fff" stroke="#000" stroke-width="0.76"/><circle cx="746.3" cy="109.8" r="0.95" fill="#000"/><path d="M739,137 L743,134" stroke="#c0392b" stroke-width="0.6"/><path d="M742.5,133.5 L748,131 L750,136.5 L744.5,139 Z" fill="#c0392b"/><ellipse cx="745.5" cy="141.5" rx="3.6799999999999997" ry="2.1849999999999996" fill="#fff" stroke="#000" stroke-width="0.9199999999999999"/><circle cx="745.5" cy="141.5" r="1.15" fill="#000"/><path d="M739,153 L743,150" stroke="#d08868" stroke-width="0.6"/><path d="M742.5,149.5 L748,147 L750,152.5 L744.5,155 Z" fill="none" stroke="#d08868" stroke-width="0.6"/><g stroke="#d08868" stroke-width="0.5"><line x1="744.5" y1="149" x2="746.5" y2="154"/><line x1="746.5" y1="148" x2="748.5" y2="153"/></g><ellipse cx="745.5" cy="157.5" rx="3.6799999999999997" ry="2.1849999999999996" fill="#fff" stroke="#000" stroke-width="0.9199999999999999"/><circle cx="745.5" cy="157.5" r="1.15" fill="#000"/><path d="M739,169 L743.5,165 L748.5,163.5 L750,169 L745,171 Z" fill="#c0392b"/><path d="M738.5,171 L743,166" stroke="#333" stroke-width="0.5"/><ellipse cx="745.5" cy="172.8" rx="3.6799999999999997" ry="2.1849999999999996" fill="#fff" stroke="#000" stroke-width="0.9199999999999999"/><circle cx="745.5" cy="172.8" r="1.15" fill="#000"/><path d="M739.5,181.5 L745.5,181.5 L745.5,185.5 L748.5,185.5 L748.5,191.5 L739.5,191.5 Z" fill="#fff" stroke="#555" stroke-width="0.7"/><ellipse cx="746.3" cy="190.8" rx="3.04" ry="1.805" fill="#fff" stroke="#000" stroke-width="0.76"/><circle cx="746.3" cy="190.8" r="0.95" fill="#000"/><g fill="none" stroke="#c89a8a" stroke-width="0.6"><rect x="739.5" y="197.5" width="5" height="3"/><rect x="739.5" y="200.5" width="7" height="3"/><rect x="739.5" y="203.5" width="9" height="4"/></g><ellipse cx="746.3" cy="207" rx="3.04" ry="1.805" fill="#fff" stroke="#000" stroke-width="0.76"/><circle cx="746.3" cy="207" r="0.95" fill="#000"/><g fill="#10a010"><rect x="739" y="212.8" width="5" height="1.5"/><rect x="739" y="215.5" width="5" height="1.5"/><rect x="739" y="218.3" width="9.5" height="1.5"/><rect x="739" y="221" width="6" height="1.5"/></g><ellipse cx="746.3" cy="222" rx="3.04" ry="1.805" fill="#fff" stroke="#000" stroke-width="0.76"/><circle cx="746.3" cy="222" r="0.95" fill="#000"/><rect x="739.5" y="230.5" width="9" height="9.5" fill="#fff" stroke="#555" stroke-width="0.7"/><rect x="744" y="234.5" width="3" height="4" fill="#b8c6e0" stroke="#4a6fa5" stroke-width="0.5"/><ellipse cx="746.3" cy="239.8" rx="3.04" ry="1.805" fill="#fff" stroke="#000" stroke-width="0.76"/><circle cx="746.3" cy="239.8" r="0.95" fill="#000"/><g fill="none" stroke="#c89a8a" stroke-width="0.6"><rect x="739.5" y="246.5" width="9" height="9"/><line x1="742" y1="246.5" x2="742" y2="255.5"/><line x1="745.5" y1="246.5" x2="745.5" y2="255.5"/></g><ellipse cx="746.3" cy="255.5" rx="3.04" ry="1.805" fill="#fff" stroke="#000" stroke-width="0.76"/><circle cx="746.3" cy="255.5" r="0.95" fill="#000"/><g fill="#10a010"><rect x="739.3" y="262" width="1.4" height="10"/><rect x="741.8" y="262" width="1.4" height="10"/><rect x="746.5" y="262" width="1.4" height="7"/></g><rect x="744.3" y="262" width="1.2" height="1.5" fill="#222"/><ellipse cx="746.5" cy="271.5" rx="3.04" ry="1.805" fill="#fff" stroke="#000" stroke-width="0.76"/><circle cx="746.5" cy="271.5" r="0.95" fill="#000"/><path d="M738.5,298 L743,301.5 M738.5,301.5 L743,298" stroke="#111" stroke-width="0.9"/><circle cx="746" cy="303.5" r="2.2" fill="none" stroke="#111" stroke-width="1.4" stroke-dasharray="1,0.7"/><circle cx="746" cy="303.5" r="1.2" fill="#111"/><ellipse cx="746.3" cy="296.5" rx="3.2" ry="1.9" fill="#fff" stroke="#000" stroke-width="0.8"/><circle cx="746.3" cy="296.5" r="1.0" fill="#000"/><rect x="739" y="310.5" width="4" height="4" fill="#fff" stroke="#777" stroke-width="0.5"/><rect x="739" y="315" width="4" height="5" fill="#fff" stroke="#777" stroke-width="0.5"/><path d="M743.5,310.5 L746,310.5 L746,315 L749,315 L749,321.5 L743.5,321.5 Z" fill="#f0b060"/><ellipse cx="746.5" cy="320.5" rx="3.04" ry="1.805" fill="#fff" stroke="#000" stroke-width="0.76"/><circle cx="746.5" cy="320.5" r="0.95" fill="#000"/><g fill="none" stroke="#666" stroke-width="0.6" stroke-dasharray="1,0.6"><rect x="757.5" y="66" width="7.5" height="7.5"/><line x1="761" y1="66" x2="761" y2="73.5"/><line x1="757.5" y1="70" x2="765" y2="70"/></g><path d="M758,84.5 L758,82 L761,78.5 L764,82 L764,84.5 Z" fill="none" stroke="#d0d3da" stroke-width="0.7"/><path d="M757.5,95.5 L757.5,90 L763.5,88.5 L765,89.5 L765,94.5 L759,96.5 Z" fill="#fff" stroke="#444" stroke-width="0.7"/><line x1="759" y1="90.5" x2="759" y2="96.5" stroke="#444" stroke-width="0.5"/><path d="M757.5,107.5 L764.5,100.5 L764.5,107.5 Z" fill="none" stroke="#d0d3da" stroke-width="0.7"/><path d="M758,121.5 L758.5,118 L762,115.5" fill="none" stroke="#555" stroke-width="0.7"/><circle cx="763" cy="115" r="0.8" fill="#30a030"/><path d="M757,128.5 L760,126.5" stroke="#c0392b" stroke-width="0.5"/><path d="M760,126 L764,124.5 L765.5,128.5 L761.5,130 Z" fill="#c0392b"/><path d="M757,140 L760,138" stroke="#e0a890" stroke-width="0.5"/><path d="M760,137.5 L764,136 L765.5,140 L761.5,141.5 Z" fill="none" stroke="#e0a890" stroke-width="0.6"/><path d="M757,151.5 L760,149.5" stroke="#c8ccd4" stroke-width="0.5"/><path d="M760,149 L764,147.5 L765.5,151.5 L761.5,153 Z" fill="#c8ccd4"/><path d="M757.5,163 L761.5,163 L761.5,165.5 L764.5,165.5 L764.5,170.5 L757.5,170.5 Z" fill="#fff" stroke="#555" stroke-width="0.6"/><g fill="none" stroke="#d8aa9a" stroke-width="0.6"><rect x="757.5" y="174.5" width="4" height="2.5"/><rect x="757.5" y="177" width="5.5" height="2.5"/><rect x="757.5" y="179.5" width="7.5" height="2.5"/></g><g fill="#c8ccd4"><rect x="757.5" y="186" width="4" height="0.8"/><rect x="757.5" y="188" width="6" height="0.8"/><rect x="757.5" y="190" width="7.5" height="0.8"/><rect x="757.5" y="192" width="7.5" height="0.8"/></g><g fill="#fff" stroke="#555" stroke-width="0.6"><rect x="757.5" y="200" width="3" height="6.5"/><rect x="761.5" y="200" width="3.5" height="6.5"/></g><g fill="none" stroke="#d8aa9a" stroke-width="0.6"><rect x="757.5" y="211.5" width="3" height="6.5"/><rect x="761.5" y="211.5" width="3.5" height="6.5"/></g><g fill="none" stroke="#cdd0d7" stroke-width="0.6"><line x1="758" y1="223" x2="758" y2="229.5"/><line x1="759.5" y1="223" x2="759.5" y2="229.5"/><line x1="764.5" y1="223" x2="764.5" y2="229.5"/></g><rect x="757.5" y="237" width="8" height="7.5" fill="#c8a070" stroke="#8a6a40" stroke-width="0.5"/><rect x="759.5" y="239.5" width="4" height="2.5" fill="#fff"/><rect x="757.5" y="251" width="8" height="7.5" fill="#eee" stroke="#6b86b0" stroke-width="0.6"/><rect x="757.5" y="251" width="8" height="1.2" fill="#3a5f9a"/><path d="M757.5,271.5 L763,275.5 M757.5,275.5 L763,271.5" stroke="#c2c6ce" stroke-width="0.8"/><circle cx="758" cy="271.5" r="1" fill="none" stroke="#c2c6ce" stroke-width="0.5"/><circle cx="758" cy="275.5" r="1" fill="none" stroke="#c2c6ce" stroke-width="0.5"/><rect x="757.5" y="280.5" width="5" height="5" fill="none" stroke="#c2c6ce" stroke-width="0.6"/><rect x="760" y="283" width="5" height="5" fill="#eceef4" stroke="#c2c6ce" stroke-width="0.6"/><rect x="757.5" y="291.5" width="5" height="6" fill="none" stroke="#c2c6ce" stroke-width="0.6"/><rect x="759.5" y="293.5" width="5" height="6" fill="#eceef4" stroke="#c2c6ce" stroke-width="0.6"/><line x1="758" y1="309" x2="763" y2="304" stroke="#c2c6ce" stroke-width="0.8"/><rect x="757.5" y="314.5" width="6" height="6" fill="none" stroke="#c2c6ce" stroke-width="0.6"/><line x1="760" y1="318" x2="765" y2="313" stroke="#c2c6ce" stroke-width="1"/><path d="M758,327 A3.2,3.2 0 0 1 764,326 M764,329 A3.2,3.2 0 0 1 758,330" fill="none" stroke="#c2c6ce" stroke-width="0.7"/><rect x="757.5" y="336.5" width="8" height="8" fill="none" stroke="#333" stroke-width="0.7" stroke-dasharray="1,2"/><rect x="760" y="337.5" width="4.5" height="4" fill="#f0a040"/><circle cx="760.5" cy="341.5" r="2" fill="none" stroke="#444" stroke-width="0.6"/><path d="M758,353.5 L764,347.5" stroke="#c2c6ce" stroke-width="1.6"/><line x1="799" y1="273.5" x2="807" y2="273.5" stroke="#c2c6ce" stroke-width="1.2"/><rect x="799.5" y="280.5" width="4" height="5" fill="none" stroke="#c2c6ce" stroke-width="0.6"/><rect x="802.5" y="283.5" width="4.5" height="4.5" fill="#c4c7ce"/><path d="M799.5,299 L806,292 M799.5,292 L806,299" stroke="#c2c6ce" stroke-width="0.6" stroke-dasharray="1,0.7"/><rect x="800.5" y="303" width="5" height="6.5" fill="#d9dce3" stroke="#c2c6ce" stroke-width="0.5"/><path d="M799.5,314 L806,314 L802,317 L806,320 L799.5,320" fill="none" stroke="#c2c6ce" stroke-width="0.8"/><circle cx="803" cy="328" r="3.2" fill="none" stroke="#c2c6ce" stroke-width="0.6" stroke-dasharray="1,0.7"/><rect x="799.5" y="336.5" width="7.5" height="8" fill="#eceef4" stroke="#c2c6ce" stroke-width="0.6"/><line x1="803" y1="336.5" x2="803" y2="341" stroke="#c2c6ce" stroke-width="0.5"/><path d="M799.5,347.5 L802,350 L799.5,352.5 M802,347.5 L804.5,350 L802,352.5 M804.5,347.5 L807,350 L804.5,352.5" fill="none" stroke="#c2c6ce" stroke-width="0.6"/><path d="M757,462 L764,462 L767,465 L757,465 Z" fill="#c9ccd3"/><path d="M763,460 L766,462" stroke="#c9ccd3" stroke-width="0.6"/><text x="758" y="471.5" font-family="Liberation Sans" font-size="5" fill="#c4c7ce">1</text><path d="M762,468 L766,471 M762,471 L766,468" stroke="#c4c7ce" stroke-width="0.7"/><path d="M773,462 L780,462 L783,465 L773,465 Z" fill="#c9ccd3"/><path d="M779,460 L782,462" stroke="#c9ccd3" stroke-width="0.6"/><text x="774" y="471.5" font-family="Liberation Sans" font-size="5" fill="#c4c7ce">2</text><path d="M778,468 L782,471 M778,471 L782,468" stroke="#c4c7ce" stroke-width="0.7"/><path d="M789,460.5 L799,460.5" stroke="#c4c7ce" stroke-width="0.6"/><rect x="789" y="463" width="9" height="3" fill="#c9ccd3"/><path d="M795,468 L799,471 M795,471 L799,468" stroke="#c4c7ce" stroke-width="0.7"/><path d="M806,459.8 L816,459.8" stroke="#c4c7ce" stroke-width="0.6"/><rect x="805" y="462" width="12" height="1.5" fill="#c9ccd3"/><rect x="805" y="465" width="12" height="1.5" fill="#c9ccd3"/><rect x="813" y="469" width="4" height="1" fill="#c9ccd3"/><rect x="763" y="479" width="4" height="4" fill="none" stroke="#c4c7ce" stroke-width="0.6"/><rect x="762" y="482" width="4" height="4" fill="none" stroke="#c4c7ce" stroke-width="0.6"/><rect x="781" y="481" width="8" height="5" fill="none" stroke="#c4c7ce" stroke-width="0.6"/><line x1="781" y1="478.5" x2="789" y2="478.5" stroke="#c4c7ce" stroke-width="0.6"/><circle cx="804" cy="482.5" r="3.3" fill="none" stroke="#c4c7ce" stroke-width="0.6"/><circle cx="804" cy="482.5" r="1.2" fill="#c4c7ce"/><path d="M823.5,482 L827,479.5 L832,480.5 L832,485 L828.5,487.5 L823.5,486 Z" fill="#d03030"/><path d="M823.5,482 L827,479.5 L832,480.5 L828.5,483 Z" fill="#40a040"/><path d="M823.5,482 L828.5,483 L828.5,487.5 L823.5,486 Z" fill="#3a80c8"/><rect x="729.8" y="497" width="12" height="12" fill="#fce37a"/><ellipse cx="735" cy="503" rx="4.0" ry="2.375" fill="#fff" stroke="#000" stroke-width="1.0"/><circle cx="735" cy="503" r="1.25" fill="#000"/><rect x="729.5" y="514.5" width="11" height="10.5" fill="#fce37a"/><ellipse cx="735" cy="519.7" rx="3.6799999999999997" ry="2.1849999999999996" fill="#fff" stroke="#000" stroke-width="0.9199999999999999"/><circle cx="735" cy="519.7" r="1.15" fill="#000"/><path d="M573,500.3 L578,500.3" stroke="#c4c7ce" stroke-width="0.5"/><rect x="570.5" y="503.5" width="4.5" height="4.5" fill="#c0c3cb" stroke="#c4c7ce" stroke-width="0.5"/><rect x="576.5" y="503.5" width="4.5" height="4.5" fill="#f4f5f8" stroke="#c4c7ce" stroke-width="0.5"/><path d="M589,500.3 L594,500.3" stroke="#c4c7ce" stroke-width="0.5"/><rect x="586.5" y="503.5" width="4.5" height="4.5" fill="#f4f5f8" stroke="#c4c7ce" stroke-width="0.5"/><rect x="592.5" y="503.5" width="4.5" height="4.5" fill="#c0c3cb" stroke="#c4c7ce" stroke-width="0.5"/><rect x="602" y="502" width="3.5" height="3.5" fill="#c0c3cb" stroke="#c4c7ce" stroke-width="0.5"/><rect x="611" y="498" width="3" height="3" fill="#c0c3cb" stroke="#c4c7ce" stroke-width="0.5"/><rect x="611" y="502.5" width="3" height="3" fill="#f4f5f8" stroke="#c4c7ce" stroke-width="0.5"/><rect x="611" y="507" width="3" height="3" fill="#c0c3cb" stroke="#c4c7ce" stroke-width="0.5"/><rect x="618" y="502" width="3.5" height="3.5" fill="#f4f5f8" stroke="#c4c7ce" stroke-width="0.5"/><rect x="627" y="498" width="3" height="3" fill="#f4f5f8" stroke="#c4c7ce" stroke-width="0.5"/><rect x="627" y="502.5" width="3" height="3" fill="#f4f5f8" stroke="#c4c7ce" stroke-width="0.5"/><rect x="627" y="507" width="3" height="3" fill="#f4f5f8" stroke="#c4c7ce" stroke-width="0.5"/><path d="M638,499.5 Q642,497.5 642.5,501" fill="none" stroke="#111" stroke-width="0.8"/><path d="M637,499.5 L639,498 L639,501 Z" fill="#111"/><ellipse cx="641" cy="506.5" rx="4.0" ry="2.375" fill="#fff" stroke="#000" stroke-width="1.0"/><circle cx="641" cy="506.5" r="1.25" fill="#000"/><path d="M660.5,499.5 Q657,497.5 656,501" fill="none" stroke="#ccd0d6" stroke-width="0.7"/><ellipse cx="654.5" cy="506.5" rx="3.84" ry="2.28" fill="#eceef4" stroke="#c4c7ce" stroke-width="0.96"/><circle cx="654.5" cy="506.5" r="1.2" fill="#c4c7ce"/><rect x="670.5" y="498" width="3.5" height="3.5" fill="#b01c28"/><ellipse cx="672.3" cy="505.5" rx="4" ry="2.1" fill="#aaa" stroke="#555" stroke-width="0.6"/><rect x="686" y="498" width="3" height="3" fill="#c4c7ce"/><ellipse cx="687.8" cy="505.7" rx="3.2" ry="1.9" fill="#eceef4" stroke="#c4c7ce" stroke-width="0.8"/><circle cx="687.8" cy="505.7" r="1.0" fill="#c4c7ce"/><g fill="none" stroke="#b0b4bd" stroke-width="0.7"><path d="M698.5,500 L698.5,498.5 L700,498.5 M708.5,498.5 L710,498.5 L710,500 M698.5,507.5 L698.5,509 L700,509 M710,507.5 L710,509 L708.5,509"/></g><rect x="702.5" y="499" width="3" height="3" fill="#c4c7ce"/><ellipse cx="704.2" cy="505.5" rx="3.8" ry="2" fill="#e6e8ee" stroke="#c8cbd2" stroke-width="0.5"/><g fill="none" stroke="#b0b4bd" stroke-width="0.7"><path d="M714.5,500 L714.5,498.5 L716,498.5 M724.5,498.5 L726,498.5 L726,500 M714.5,507.5 L714.5,509 L716,509 M726,507.5 L726,509 L724.5,509"/></g><rect x="718.5" y="499" width="3" height="3" fill="#c4c7ce"/><ellipse cx="720.2" cy="505.5" rx="3.2" ry="1.9" fill="#eceef4" stroke="#c4c7ce" stroke-width="0.8"/><circle cx="720.2" cy="505.5" r="1.0" fill="#c4c7ce"/><rect x="12.5" y="477.5" width="11.5" height="11" fill="#c3d3f3" stroke="#9aa2b4" stroke-width="0.9"/><rect x="14.8" y="480" width="7" height="6.5" rx="1.5" fill="#fff" stroke="#d07070" stroke-width="0.6"/><path d="M14.8,482 Q18.3,483.3 21.8,482 M14.8,484 Q18.3,485.3 21.8,484" fill="none" stroke="#d07070" stroke-width="0.6"/><ellipse cx="18.3" cy="480.8" rx="3.2" ry="1" fill="#fff" stroke="#d07070" stroke-width="0.5"/><g fill="none" stroke="#cfd3da" stroke-width="0.6"><path d="M3.0,493 L6.5,491 L10.0,493 L6.5,495 Z"/><path d="M3.0,495.5 L6.5,497.5 L10.0,495.5"/><path d="M3.0,498 L6.5,500 L10.0,498"/></g><g fill="none" stroke="#cfd3da" stroke-width="0.6"><path d="M14.5,493 L18,491 L21.5,493 L18,495 Z"/><path d="M14.5,495.5 L18,497.5 L21.5,495.5"/><path d="M14.5,498 L18,500 L21.5,498"/></g><g fill="none" stroke="#cfd3da" stroke-width="0.6"><path d="M25.5,493 L29,491 L32.5,493 L29,495 Z"/><path d="M25.5,495.5 L29,497.5 L32.5,495.5"/><path d="M25.5,498 L29,500 L32.5,498"/></g><rect x="42.3" y="477.3" width="10.8" height="11.2" fill="#3d8ef0" stroke="#a0a6b2" stroke-width="0.6"/><path d="M45,483 Q47,480 49,481 L50,486" fill="none" stroke="#fff" stroke-width="0.6"/><rect x="47" y="481.5" width="3" height="4.5" fill="none" stroke="#fff" stroke-width="0.6"/><rect x="42.5" y="489" width="10.5" height="11" fill="#fff" stroke="#a9aeb8" stroke-width="0.7"/><path d="M45,495 Q46,493.5 47.5,494.5 Q49,495.5 50.5,494" fill="none" stroke="#333" stroke-width="0.6"/><rect x="42.5" y="500.5" width="10.5" height="11" fill="#fff" stroke="#a9aeb8" stroke-width="0.7"/><circle cx="47.7" cy="506" r="2.2" fill="none" stroke="#222" stroke-width="0.9" stroke-dasharray="1.1,0.5"/><rect x="220.5" y="478" width="10" height="10.5" fill="#e9ecf4" stroke="#9aa0ad" stroke-width="0.6"/><circle cx="225" cy="482" r="2.6" fill="#fff" stroke="#333" stroke-width="0.6"/><line x1="223" y1="484" x2="221.5" y2="486.5" stroke="#333" stroke-width="0.9"/><rect x="228" y="485.5" width="1.2" height="1.5" fill="#333"/><path d="M346,485 L349,485 L349,482" fill="none" stroke="#d0d3da" stroke-width="0.6"/><rect x="353" y="478" width="10" height="10.5" fill="#e9ecf4" stroke="#9aa0ad" stroke-width="0.6"/><circle cx="357.5" cy="482" r="2.6" fill="#fff" stroke="#333" stroke-width="0.6"/><line x1="355.5" y1="484" x2="354" y2="486.5" stroke="#333" stroke-width="0.9"/><rect x="358.5" y="484.5" width="3" height="2.5" fill="none" stroke="#555" stroke-width="0.5"/><path d="M14.9,50.8 L19.6,50.8 L17.25,53.4 Z" fill="#111"/><rect x="29.3" y="48.3" width="4.5" height="4.3" fill="#fff" stroke="#7a9cc8" stroke-width="0.5"/><rect x="29.3" y="48" width="4.5" height="0.9" fill="#2a5590"/><rect x="26.3" y="51.5" width="4.5" height="4" fill="#fff" stroke="#b0b0b0" stroke-width="0.5"/><rect x="26.3" y="51.3" width="4.5" height="0.8" fill="#888"/><path d="M27.5,53 L29.8,55 M29.8,53 L27.5,55" stroke="#e04040" stroke-width="0.6"/><rect x="40.3" y="48.3" width="3.6" height="7.3" fill="#fff" stroke="#7a9cc8" stroke-width="0.6"/><rect x="40.3" y="48" width="3.6" height="1" fill="#2a5590"/><rect x="45.2" y="48.3" width="3.6" height="7.3" fill="#fff" stroke="#7a9cc8" stroke-width="0.6"/><rect x="45.2" y="48" width="3.6" height="1" fill="#2a5590"/></svg>
</body></html>
